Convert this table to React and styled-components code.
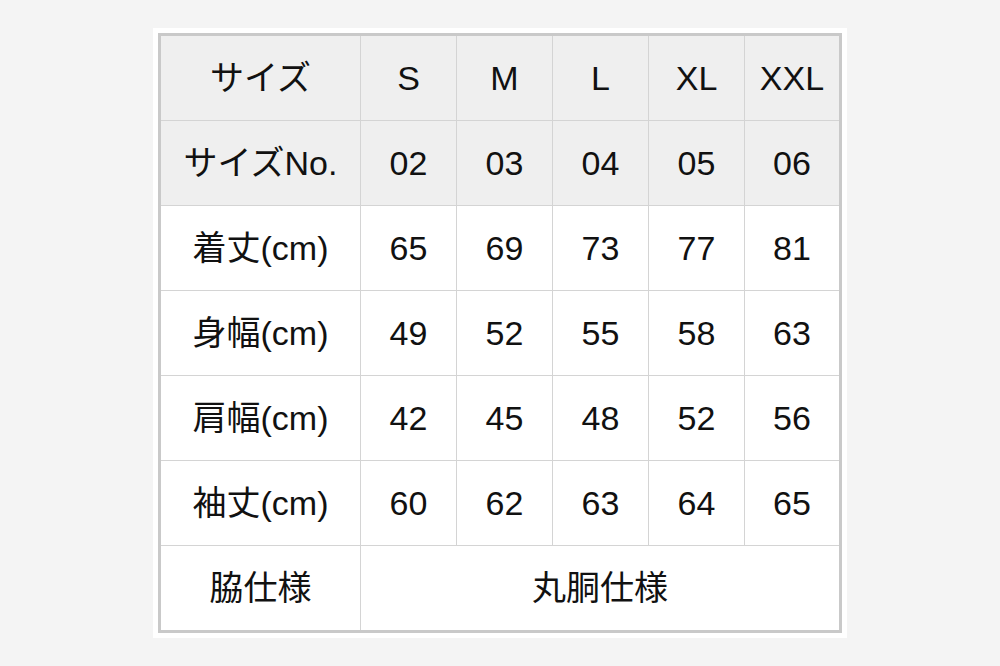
import React from "react";
import styled, { createGlobalStyle } from "styled-components";

const GlobalStyle = createGlobalStyle`
  html, body {
    margin: 0;
    padding: 0;
    background: #f4f4f4;
  }
`;

const sizes = ["S", "M", "L", "XL", "XXL"];
const sizeNos = ["02", "03", "04", "05", "06"];
const rows = [
  { label: "着丈(cm)", values: [65, 69, 73, 77, 81] },
  { label: "身幅(cm)", values: [49, 52, 55, 58, 63] },
  { label: "肩幅(cm)", values: [42, 45, 48, 52, 56] },
  { label: "袖丈(cm)", values: [60, 62, 63, 64, 65] },
];

const App = () => {
  return (
    <Page>
      <GlobalStyle />
      <Card>
        <Table>
          <colgroup>
            <col style={{ width: 200 }} />
            <col style={{ width: 96 }} />
            <col style={{ width: 96 }} />
            <col style={{ width: 96 }} />
            <col style={{ width: 96 }} />
            <col style={{ width: 94 }} />
          </colgroup>
          <tbody>
            <Row $head>
              <Cell>サイズ</Cell>
              {sizes.map((s) => (
                <Cell key={s}>{s}</Cell>
              ))}
            </Row>
            <Row $head>
              <Cell>サイズNo.</Cell>
              {sizeNos.map((s) => (
                <Cell key={s}>{s}</Cell>
              ))}
            </Row>
            {rows.map((r) => (
              <Row key={r.label}>
                <Cell>{r.label}</Cell>
                {r.values.map((v, i) => (
                  <Cell key={i}>{v}</Cell>
                ))}
              </Row>
            ))}
            <Row $last>
              <Cell>脇仕様</Cell>
              <Cell colSpan={5}>丸胴仕様</Cell>
            </Row>
          </tbody>
        </Table>
      </Card>
    </Page>
  );
};

export default App;

const Page = styled.div`
  width: 100%;
  height: 100vh;
  display: flex;
  align-items: center;
  justify-content: center;
`;

const Card = styled.div`
  background: #ffffff;
  padding: 5px;
`;

const Table = styled.table`
  width: 684px;
  table-layout: fixed;
  border-collapse: separate;
  border-spacing: 0;
  border: 3px solid #c9c9c9;
  font-family: "Liberation Sans", Arial, "Noto Sans CJK JP", sans-serif;
  font-size: 34px;
  line-height: 1;
  color: #111111;
`;

const Row = styled.tr`
  height: ${(p) => (p.$last ? "84px" : "85px")};
  background: ${(p) => (p.$head ? "#efefef" : "#ffffff")};

  td {
    border-bottom: ${(p) => (p.$last ? "none" : "1px solid #d4d4d4")};
  }
`;

const Cell = styled.td`
  box-sizing: border-box;
  padding: 0;
  text-align: center;
  vertical-align: middle;
  border-right: 1px solid #d4d4d4;
  white-space: nowrap;

  &:last-child {
    border-right: none;
  }
`;
